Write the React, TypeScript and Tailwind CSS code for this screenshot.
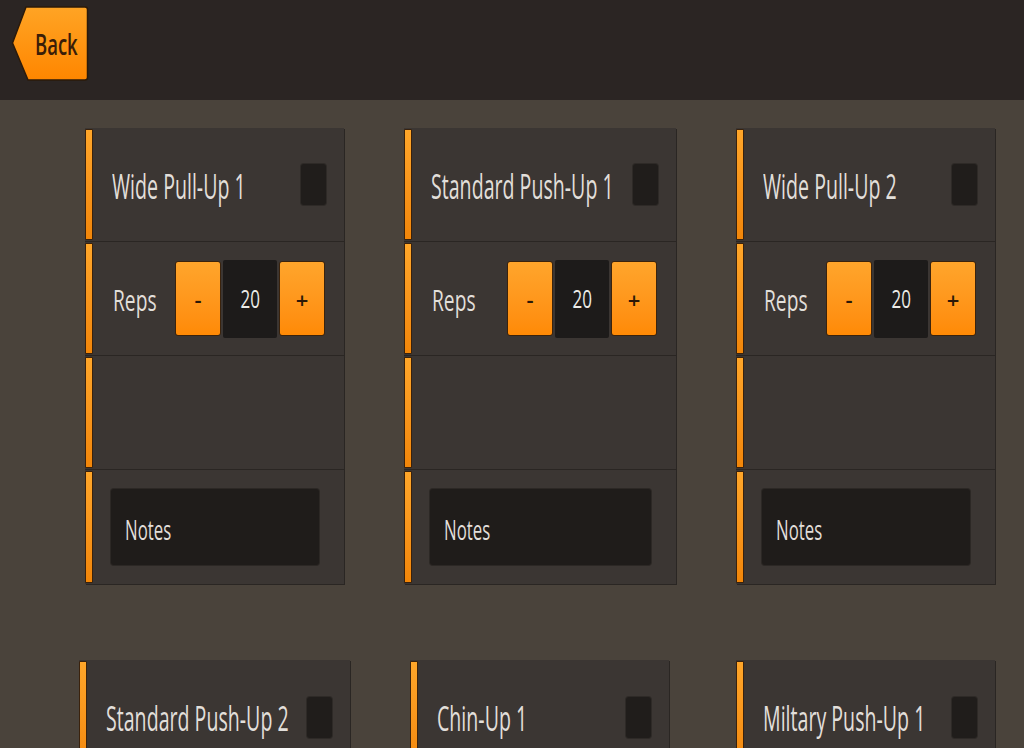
import React from "react";

const FONT = { fontFamily: '"Open Sans", "DejaVu Sans", sans-serif' };

function Bar() {
  return (
    <div className="w-[8px] shrink-0 py-[1px]">
      <div className="h-full w-full rounded-[1px] border border-[#3a220c] bg-gradient-to-b from-[#ffa629] to-[#f28608]" />
    </div>
  );
}

function Section({ children, last, className }: { children?: React.ReactNode; last?: boolean; className?: string }) {
  return (
    <div className={`flex h-[114px] ${last ? "" : "border-b border-[#2a2623]"}`}>
      <Bar />
      <div className={`flex min-w-0 flex-1 items-center ${className ?? ""}`}>{children}</div>
    </div>
  );
}

function Title({ text }: { text: string }) {
  return (
    <div className="mt-[3px] min-w-0 flex-1">
      <span className="inline-block origin-left scale-x-[0.56] whitespace-nowrap text-[35px] leading-none text-[#e2dfda]">
        {text}
      </span>
    </div>
  );
}

function Check() {
  return <div className="h-[41px] w-[25px] shrink-0 rounded-[3px] bg-[#201d1b] shadow-[0_0_0_1px_#2e2a27]" />;
}

function OrangeBtn({ label }: { label: string }) {
  return (
    <div className="flex h-[75px] w-[46px] items-center justify-center rounded-[3px] border border-[#3b230c] bg-gradient-to-b from-[#ffa52b] to-[#ff8a05] text-[22px] font-semibold leading-none text-[#2a1808]">
      {label}
    </div>
  );
}

function Stepper() {
  return (
    <div className="flex shrink-0 items-center gap-[2px]">
      <OrangeBtn label="-" />
      <div className="flex h-[78px] w-[54px] items-center justify-center rounded-[2px] bg-[#1d1b1a]">
        <span className="inline-block scale-x-[0.68] text-[25px] font-medium leading-none text-[#ecebe7]">20</span>
      </div>
      <OrangeBtn label="+" />
    </div>
  );
}

function Card({ title, className, full = true }: { title: string; className: string; full?: boolean }) {
  return (
    <div className={`shrink-0 bg-[#3b3633] shadow-[1px_1px_0_#2a2623] ${className}`}>
      <Section className="pl-[19px] pr-[18px]" last={!full}>
        <Title text={title} />
        <Check />
      </Section>
      {full && (
        <>
          <Section className="pl-[20px] pr-[19px]">
            <div className="mt-[5px] min-w-0 flex-1">
              <span className="inline-block origin-left scale-x-[0.64] whitespace-nowrap text-[30px] leading-none text-[#e2dfda]">
                Reps
              </span>
            </div>
            <Stepper />
          </Section>
          <Section />
          <Section last className="pl-[18px] pr-[25px]">
            <div className="flex h-[76px] flex-1 items-center rounded-[3px] bg-[#1f1c1a] pl-[14px] pt-[4px] shadow-[0_0_0_1px_#2c2825]">
              <span className="inline-block origin-left scale-x-[0.6] whitespace-nowrap text-[28px] leading-none text-[#e2dfda]">
                Notes
              </span>
            </div>
          </Section>
        </>
      )}
    </div>
  );
}

function BackButton() {
  return (
    <div className="relative ml-[11px] mt-[6px] h-[75px] w-[78px]">
      <svg className="absolute inset-0" width="78" height="75" viewBox="0 0 78 75">
        <defs>
          <linearGradient id="bg" x1="0" y1="0" x2="0" y2="1">
            <stop offset="0" stopColor="#ffa424" />
            <stop offset="1" stopColor="#ff8600" />
          </linearGradient>
        </defs>
        <path
          d="M15 1 H74 Q76.5 1 76.5 3.5 V71.5 Q76.5 74 74 74 H17 L1.5 37 Z"
          fill="url(#bg)"
          stroke="#2b1a0a"
          strokeWidth="1.5"
          strokeLinejoin="round"
        />
      </svg>
      <div className="relative flex h-full items-center pl-[24px]">
        <span className="inline-block origin-left scale-x-[0.66] whitespace-nowrap text-[28px] font-semibold leading-none text-[#3a1d08]">
          Back
        </span>
      </div>
    </div>
  );
}

export default function App() {
  return (
    <div className="h-[748px] w-[1024px] overflow-hidden bg-[#4a433b]" style={FONT}>
      <div className="flex h-[100px] items-start bg-[#2b2523]">
        <BackButton />
      </div>
      <div className="flex pt-[28px]">
        <Card title="Wide Pull-Up 1" className="ml-[85px] w-[259px]" />
        <Card title="Standard Push-Up 1" className="ml-[60px] w-[272px]" />
        <Card title="Wide Pull-Up 2" className="ml-[60px] w-[259px]" />
      </div>
      <div className="flex pt-[76px]">
        <Card title="Standard Push-Up 2" full={false} className="ml-[79px] w-[271px]" />
        <Card title="Chin-Up 1" full={false} className="ml-[60px] w-[259px]" />
        <Card title="Miltary Push-Up 1" full={false} className="ml-[67px] w-[259px]" />
      </div>
    </div>
  );
}
